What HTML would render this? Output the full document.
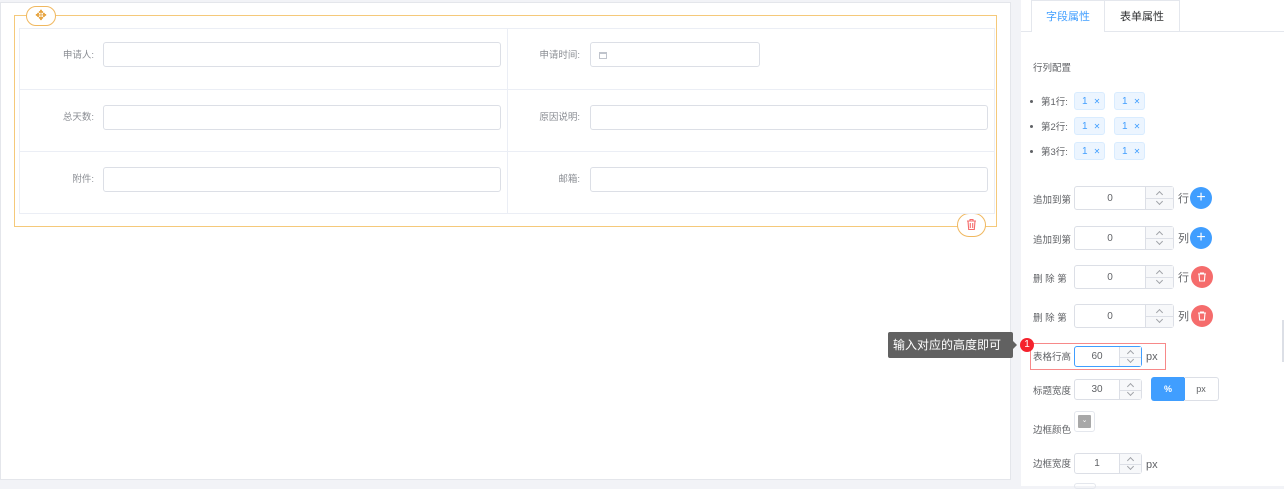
<!DOCTYPE html>
<html><head><meta charset="utf-8"><style>
*{box-sizing:border-box;margin:0;padding:0}
body{width:1284px;height:486px;background:#f2f3f7;position:relative;overflow:hidden;font-family:"Liberation Sans","Noto Sans CJK SC",sans-serif;font-size:10px;color:#606266}
.a{position:absolute}
.inp{position:absolute;border:1px solid #dcdfe6;border-radius:3px;background:#fff;height:25px}
.lbl{position:absolute;text-align:right;color:#8a8d93;font-size:9.5px;width:80px;line-height:12px;transform:translateY(2px)}
.num{position:absolute;border:1px solid #dcdfe6;border-radius:3px;background:#fff;height:24px;text-align:center;line-height:23px;font-size:10px;color:#606266}
.num .sp{position:absolute;right:0;top:0;bottom:0;width:28px;border-left:1px solid #dcdfe6;background:#f7f8fa}
.num .sp:after{content:"";position:absolute;left:0;right:0;top:50%;border-top:1px solid #dcdfe6}
.num .sp i{position:absolute;left:11px;width:5px;height:5px;border-left:1px solid #a0a3a8;border-top:1px solid #a0a3a8}
.num .sp i.u{top:5px;transform:rotate(45deg)}
.num .sp i.d{bottom:5px;transform:rotate(225deg)}
.rl{position:absolute;left:1033px;font-size:9.5px;color:#606266;line-height:12px;transform:translateY(2px)}
.tag{position:absolute;width:31px;height:18px;background:#ecf5ff;border:1px solid #d9ecff;border-radius:3px;color:#409eff;font-size:10px;line-height:17px;padding-left:7px}
.tag span{font-size:8px;margin-left:6px}
.circ{position:absolute;width:22px;height:22px;border-radius:50%;color:#fff;text-align:center;line-height:21px;font-size:16px}
</style></head><body>
<div class="a" style="left:0;top:2px;width:1011px;height:478px;background:#fff;border:1px solid #e4e6eb"></div>
<div class="a" style="left:1021px;top:0;width:263px;height:486px;background:#fff"></div>

<div class="a" style="left:14px;top:15px;width:983px;height:212px;border:1px solid #f5c97a"></div>
<div class="a" style="left:26px;top:6px;width:30px;height:20px;border:1px solid #f0b860;border-radius:10px;background:#fff;color:#e6a23c;text-align:center;line-height:17px;font-size:14px">✥</div>
<div class="a" style="left:957px;top:213px;width:29px;height:24px;border:1px solid #f0b860;border-radius:12px;background:#fff"></div>
<svg class="a" style="left:965px;top:218px" width="13" height="13" viewBox="0 0 13 13"><path d="M2 3h9M5 3V1.5h3V3M3 3l.7 8.5h5.6L10 3M5.3 5v5M7.7 5v5" stroke="#f56c6c" fill="none" stroke-width="1.1"/></svg>

<div class="a" style="left:19px;top:28px;width:976px;height:186px;border:1px solid #ebeef5"></div>
<div class="a" style="left:507px;top:28px;width:1px;height:186px;background:#ebeef5"></div>
<div class="a" style="left:19px;top:89px;width:976px;height:1px;background:#ebeef5"></div>
<div class="a" style="left:19px;top:151px;width:976px;height:1px;background:#ebeef5"></div>

<div class="lbl" style="left:14px;top:48px">申请人:</div>
<div class="inp" style="left:103px;top:42px;width:398px"></div>
<div class="lbl" style="left:14px;top:110px">总天数:</div>
<div class="inp" style="left:103px;top:105px;width:398px"></div>
<div class="lbl" style="left:14px;top:172px">附件:</div>
<div class="inp" style="left:103px;top:167px;width:398px"></div>

<div class="lbl" style="left:500px;top:48px">申请时间:</div>
<div class="inp" style="left:590px;top:42px;width:170px"><div class="a" style="left:8px;top:9px;width:8px;height:7px;border:1px solid #c0c4cc;border-top-width:2px"></div></div>
<div class="lbl" style="left:500px;top:110px">原因说明:</div>
<div class="inp" style="left:590px;top:105px;width:398px"></div>
<div class="lbl" style="left:500px;top:172px">邮箱:</div>
<div class="inp" style="left:590px;top:167px;width:398px"></div>

<div class="a" style="left:1021px;top:31px;width:263px;height:1px;background:#e4e7ed"></div>
<div class="a" style="left:1031px;top:0;width:74px;height:32px;background:#fff;border:1px solid #e4e7ed;border-bottom:none;color:#409eff;font-size:11px;text-align:center;line-height:32px">字段属性</div>
<div class="a" style="left:1104px;top:0;width:76px;height:31px;background:#fff;border:1px solid #e4e7ed;border-bottom:none;color:#303133;font-size:11px;text-align:center;line-height:32px">表单属性</div>

<div class="rl" style="top:61px">行列配置</div>
<div class="a" style="left:1030px;top:100px;width:3px;height:3px;border-radius:50%;background:#606266"></div>
<div class="rl" style="left:1041px;top:95px">第1行:</div>
<div class="tag" style="left:1074px;top:92px">1<span>✕</span></div><div class="tag" style="left:1114px;top:92px">1<span>✕</span></div>
<div class="a" style="left:1030px;top:125px;width:3px;height:3px;border-radius:50%;background:#606266"></div>
<div class="rl" style="left:1041px;top:120px">第2行:</div>
<div class="tag" style="left:1074px;top:117px">1<span>✕</span></div><div class="tag" style="left:1114px;top:117px">1<span>✕</span></div>
<div class="a" style="left:1030px;top:150px;width:3px;height:3px;border-radius:50%;background:#606266"></div>
<div class="rl" style="left:1041px;top:145px">第3行:</div>
<div class="tag" style="left:1074px;top:142px">1<span>✕</span></div><div class="tag" style="left:1114px;top:142px">1<span>✕</span></div>

<div class="rl" style="top:193px">追加到第</div>
<div class="num" style="left:1074px;top:186px;width:100px;padding-right:28px">0<div class="sp"><i class="u"></i><i class="d"></i></div></div>
<div class="rl" style="left:1178px;top:191px;font-size:11px">行</div>
<div class="circ" style="left:1190px;top:187px;background:#409eff">+</div>

<div class="rl" style="top:233px">追加到第</div>
<div class="num" style="left:1074px;top:226px;width:100px;padding-right:28px">0<div class="sp"><i class="u"></i><i class="d"></i></div></div>
<div class="rl" style="left:1178px;top:231px;font-size:11px">列</div>
<div class="circ" style="left:1190px;top:227px;background:#409eff">+</div>

<div class="rl" style="top:272px">删 除 第</div>
<div class="num" style="left:1074px;top:265px;width:100px;padding-right:28px">0<div class="sp"><i class="u"></i><i class="d"></i></div></div>
<div class="rl" style="left:1178px;top:270px;font-size:11px">行</div>
<div class="circ" style="left:1191px;top:266px;background:#f56c6c"></div>
<svg class="a" style="left:1197px;top:272px" width="10" height="10" viewBox="0 0 10 10"><path d="M1 2h8M3.5 2V1h3v1M2 2l.6 7h4.8L8 2" stroke="#fff" fill="none" stroke-width="1.1"/></svg>

<div class="rl" style="top:311px">删 除 第</div>
<div class="num" style="left:1074px;top:304px;width:100px;padding-right:28px">0<div class="sp"><i class="u"></i><i class="d"></i></div></div>
<div class="rl" style="left:1178px;top:309px;font-size:11px">列</div>
<div class="circ" style="left:1191px;top:305px;background:#f56c6c"></div>
<svg class="a" style="left:1197px;top:311px" width="10" height="10" viewBox="0 0 10 10"><path d="M1 2h8M3.5 2V1h3v1M2 2l.6 7h4.8L8 2" stroke="#fff" fill="none" stroke-width="1.1"/></svg>

<div class="a" style="left:888px;top:332px;width:125px;height:26px;background:#616161;border-radius:2px;color:#fff;font-size:12px;line-height:26px;padding-left:5px">输入对应的高度即可</div>
<div class="a" style="left:1013px;top:341px;width:0;height:0;border-top:4px solid transparent;border-bottom:4px solid transparent;border-left:4px solid #616161"></div>
<div class="a" style="left:1030px;top:343px;width:136px;height:27px;border:1px solid #f78989"></div>
<div class="a" style="left:1020px;top:338px;width:14px;height:14px;border-radius:50%;background:#f5222d;color:#fff;font-size:10px;text-align:center;line-height:14px">1</div>
<div class="rl" style="top:350px">表格行高</div>
<div class="num" style="left:1074px;top:346px;width:68px;height:21px;line-height:20px;border-color:#409eff;padding-right:22px">60<div class="sp" style="width:22px"><i class="u" style="left:8px;top:4px"></i><i class="d" style="left:8px;bottom:4px"></i></div></div>
<div class="rl" style="left:1146px;top:349px;font-size:11px">px</div>

<div class="rl" style="top:384px">标题宽度</div>
<div class="num" style="left:1074px;top:379px;width:68px;height:21px;line-height:20px;padding-right:22px">30<div class="sp" style="width:22px"><i class="u" style="left:8px;top:4px"></i><i class="d" style="left:8px;bottom:4px"></i></div></div>
<div class="a" style="left:1151px;top:377px;width:34px;height:24px;background:#409eff;border-radius:3px 0 0 3px;color:#fff;font-size:9px;font-weight:bold;text-align:center;line-height:24px">%</div>
<div class="a" style="left:1184px;top:377px;width:35px;height:24px;border:1px solid #dcdfe6;border-left:none;border-radius:0 3px 3px 0;color:#606266;font-size:9px;text-align:center;line-height:22px">px</div>

<div class="rl" style="top:423px">边框颜色</div>
<div class="a" style="left:1074px;top:411px;width:21px;height:21px;border:1px solid #e4e7ed;border-radius:3px;padding:3px"><div style="width:13px;height:13px;background:#a8a8a8;border-radius:1px;color:#fff;font-size:7px;text-align:center;line-height:12px">⌄</div></div>

<div class="rl" style="top:457px">边框宽度</div>
<div class="num" style="left:1074px;top:453px;width:68px;height:21px;line-height:20px;padding-right:22px">1<div class="sp" style="width:22px"><i class="u" style="left:8px;top:4px"></i><i class="d" style="left:8px;bottom:4px"></i></div></div>
<div class="rl" style="left:1146px;top:457px;font-size:11px">px</div>
<div class="a" style="left:1074px;top:483px;width:22px;height:6px;border:1px solid #e4e7ed;border-radius:3px"></div>
<div class="a" style="left:1282px;top:320px;width:2px;height:42px;background:#dcdfe6"></div>
</body></html>
